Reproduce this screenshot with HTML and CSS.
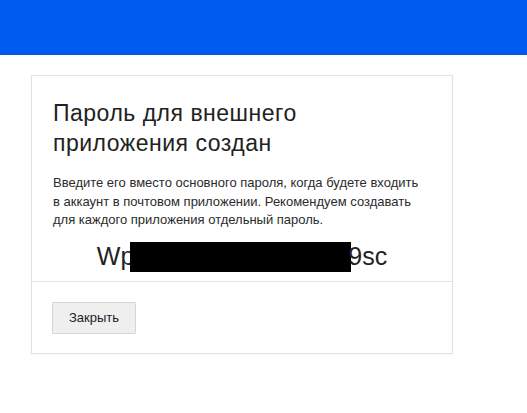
FILE: index.html
```html
<html>
	<head>
		<title></title>
		<link rel="stylesheet" href="styles.css">
	</head>
	<body>
		<div class="topbar"></div>
		<div class="dialog">
			<div class="dialog-body">
				<h2 class="dialog-title">Пароль для внешнего приложения создан</h2>
				<p class="dialog-text">Введите его вместо основного пароля, когда будете входить в аккаунт в почтовом приложении. Рекомендуем создавать для каждого приложения отдельный пароль.</p>
				<div class="password"><span>Wp</span><span class="hidden-part"></span><span>9sc</span></div>
			</div>
			<div class="dialog-footer">
				<button type="button">Закрыть</button>
			</div>
		</div>
	</body>
</html>
```

FILE: styles.css
```css
body {
  margin: 0;
  background: #fff;
  font-family: "Liberation Sans", Arial, sans-serif;
  color: #333;
}

/* Blue header strip */
.topbar {
  height: 54px;
  background-color: #005cf0;
  border-bottom: 1px solid #0a57d8;
}

/* Dialog card */
.dialog {
  width: 420px;
  margin: 20px 0 0 31px;
  border: 1px solid #e2e2e2;
  box-shadow: 0 1px 2px rgba(0, 0, 0, 0.04);
}

.dialog-body {
  padding: 22px 21px 9px 21px;
}

.dialog-title {
  margin: 0;
  width: 300px;
  font-size: 23px;
  letter-spacing: 0.5px;
  font-weight: normal;
  line-height: 30px;
  color: #222;
}

.dialog-text {
  margin: 16px 0 0 0;
  width: 372px;
  font-size: 13px;
  line-height: 18.5px;
  color: #2b2b2b;
}

.password {
  display: flex;
  justify-content: center;
  align-items: center;
  margin-top: 10px;
  font-size: 25px;
  line-height: 32px;
  color: #222;
}

.hidden-part {
  display: inline-block;
  width: 221px;
  height: 30px;
  margin: 2px -3px 0 -4px;
  background: #000;
}

.dialog-footer {
  border-top: 1px solid #e2e2e2;
  padding: 20px 21px 19px 20px;
}

button {
  width: 84px;
  height: 32px;
  padding: 0;
  background-color: #efefef;
  border: 1px solid #d6d6d6;
  border-radius: 1px;
  font-family: "Liberation Sans", Arial, sans-serif;
  font-size: 13px;
  color: #222;
  cursor: pointer;
}
```
